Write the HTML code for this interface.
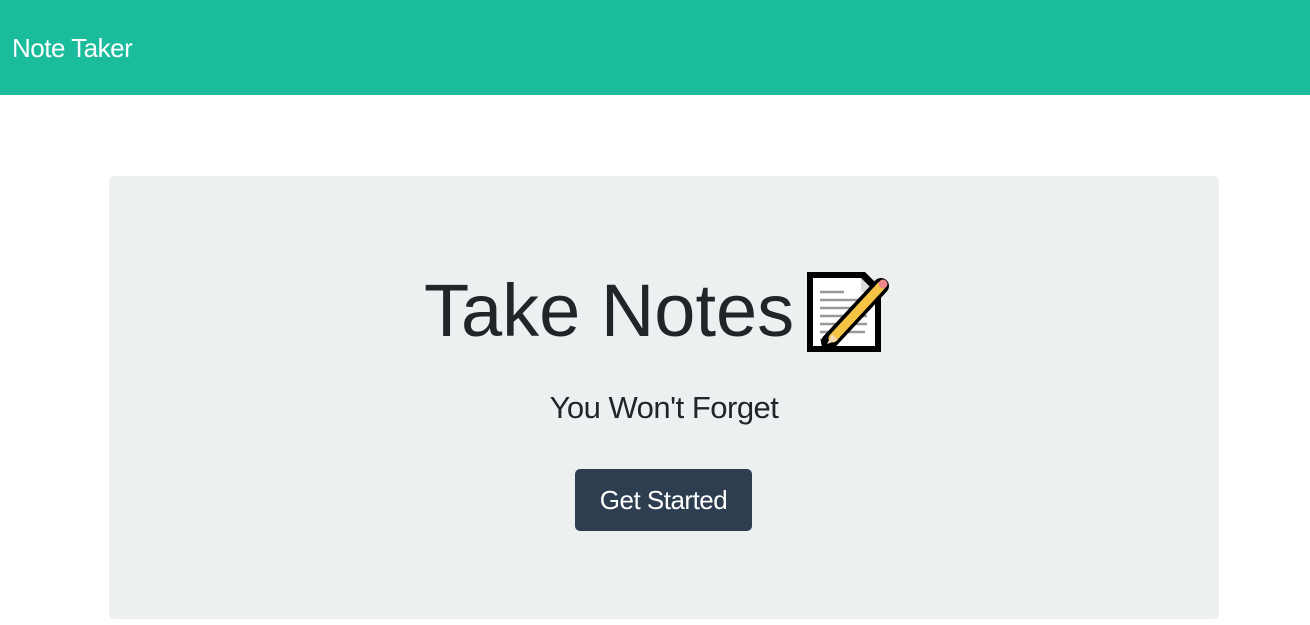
<!DOCTYPE html>
<html><head><meta charset="utf-8"><style>
body{margin:0;width:1310px;height:625px;background:#fff;font-family:"Liberation Sans",sans-serif;overflow:hidden;position:relative}
.nav{position:absolute;left:0;top:0;width:1310px;height:95px;background:#1abc9c}
.brand{position:absolute;left:12px;top:33px;font-size:26px;color:#fff;letter-spacing:-0.5px}
.jumbo{position:absolute;left:109px;top:176px;width:1110px;height:443px;background:#ecf0f1;border-radius:5px}
h1{position:absolute;left:0;top:0;margin:0;font-weight:400;font-size:74px;color:#212529;white-space:nowrap;letter-spacing:0px}
.sub{position:absolute;left:0;width:1110px;top:214px;text-align:center;font-size:31px;color:#212529;letter-spacing:-0.5px}
.btn{position:absolute;left:466px;top:293px;width:177px;height:62px;background:#2c3e50;border-radius:5px;color:#fff;font-size:26px;text-align:center;line-height:62px;letter-spacing:-0.5px}
</style></head><body>
<div class="nav"><div class="brand">Note Taker</div></div>
<div class="jumbo">
<h1 style="left:315px;top:92px">Take Notes</h1>
<svg style="position:absolute;left:694px;top:92px" width="90" height="90" viewBox="0 0 90 90">
<path d="M4 4 H62 L78 20 V84 H4 Z" fill="#000"/>
<path d="M10 10 H58 L72 24 V78 H10 Z" fill="#fff"/>
<path d="M58 10 V24 H72" fill="#ddd"/>
<g stroke="#999" stroke-width="2.5">
<line x1="17" y1="24" x2="41" y2="24"/>
<line x1="17" y1="32" x2="64" y2="32"/>
<line x1="17" y1="40" x2="64" y2="40"/>
<line x1="17" y1="48" x2="64" y2="48"/>
<line x1="17" y1="56" x2="64" y2="56"/>
<line x1="17" y1="64" x2="62" y2="64"/>
<line x1="17" y1="72" x2="28" y2="72"/>
</g>
<path d="M26 74 L78 18" stroke="#000" stroke-width="16" stroke-linecap="round"/>
<path d="M30 70 L78 18" stroke="#f6c445" stroke-width="9" stroke-linecap="round"/>
<circle cx="80" cy="16" r="4.5" fill="#e88"/>
<path d="M24 76 L29 66 L35 72 Z" fill="#f3d9b8"/>
</svg>
<div class="sub">You Won't Forget</div>
<div class="btn">Get Started</div>
</div>
</body></html>
